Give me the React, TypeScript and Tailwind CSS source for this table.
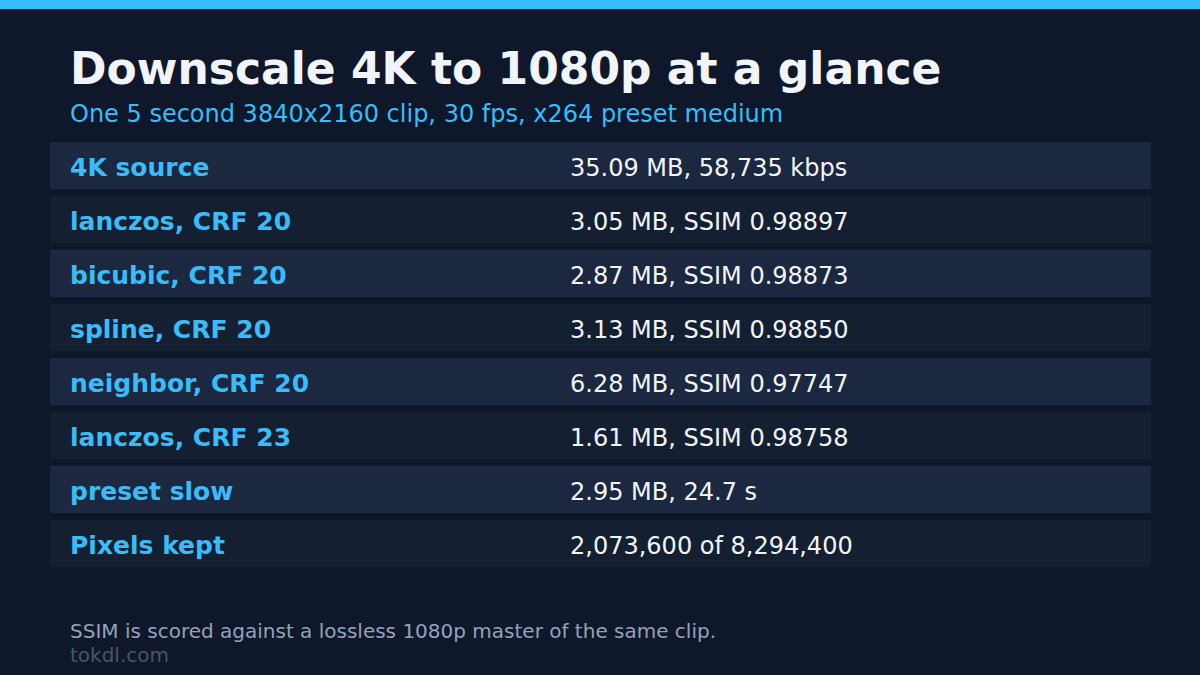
import React from "react";

const rows: [string, string][] = [
  ["4K source", "35.09 MB, 58,735 kbps"],
  ["lanczos, CRF 20", "3.05 MB, SSIM 0.98897"],
  ["bicubic, CRF 20", "2.87 MB, SSIM 0.98873"],
  ["spline, CRF 20", "3.13 MB, SSIM 0.98850"],
  ["neighbor, CRF 20", "6.28 MB, SSIM 0.97747"],
  ["lanczos, CRF 23", "1.61 MB, SSIM 0.98758"],
  ["preset slow", "2.95 MB, 24.7 s"],
  ["Pixels kept", "2,073,600 of 8,294,400"],
];

export default function App() {
  return (
    <div
      className="w-[1200px] h-[675px] bg-[#0f172a] overflow-hidden flex flex-col"
      style={{ fontFamily: '"DejaVu Sans", sans-serif' }}
    >
      <div className="h-[9px] bg-[#38bdf8] shrink-0" />
      <div className="pl-[70px] pt-[34px]">
        <h1 className="text-[44px] leading-[52px] font-bold text-[#f1f5f9]">
          Downscale 4K to 1080p at a glance
        </h1>
        <p className="mt-[5px] text-[24px] leading-[28px] text-[#38bdf8]">
          One 5 second 3840x2160 clip, 30 fps, x264 preset medium
        </p>
      </div>
      <div className="mt-[14px] mx-[50px] w-[1101px] flex flex-col gap-[7px]">
        {rows.map(([k, v], i) => (
          <div
            key={k}
            className={`h-[47px] flex items-baseline pt-[11px] ${i % 2 === 0 ? "bg-[#1c2740]" : "bg-[#151f32]"}`}
          >
            <div className="w-[520px] pl-[20px] text-[25px] leading-[29px] font-bold text-[#38bdf8]">{k}</div>
            <div className="text-[24px] leading-[28px] text-[#f1f5f9]">{v}</div>
          </div>
        ))}
      </div>
      <div className="pl-[70px] mt-[52px]">
        <p className="text-[20px] leading-[24px] text-[#94a3b8]">
          SSIM is scored against a lossless 1080p master of the same clip.
        </p>
        <p className="text-[20px] leading-[24px] text-[#475569]">tokdl.com</p>
      </div>
    </div>
  );
}
